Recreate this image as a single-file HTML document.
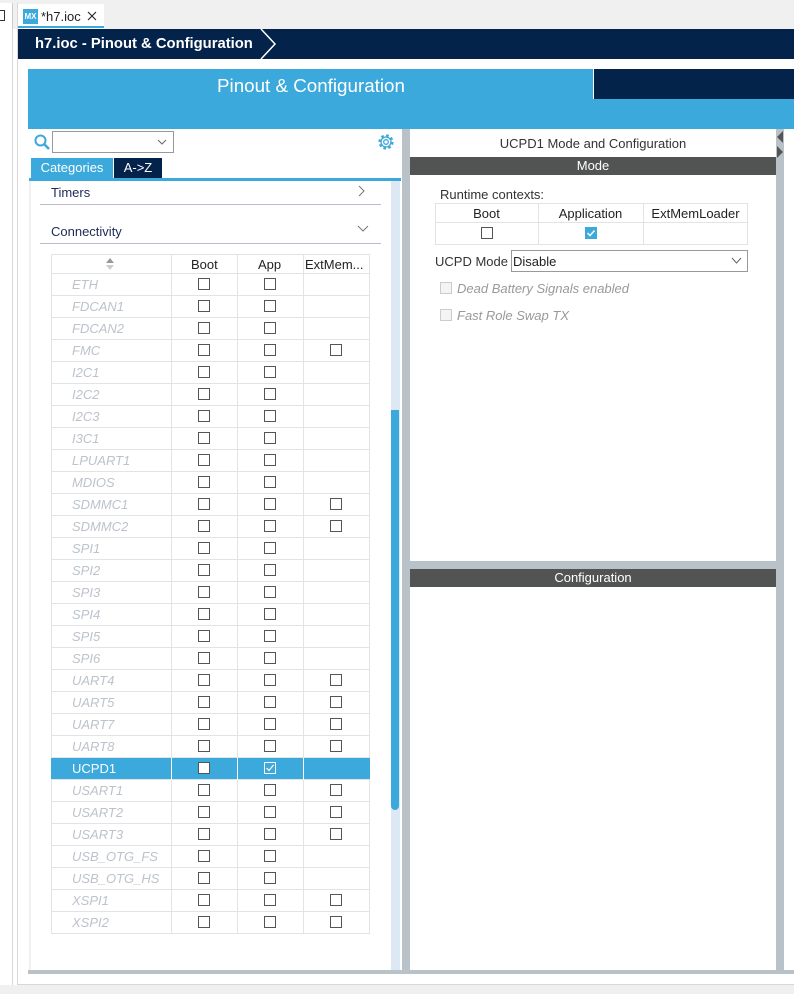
<!DOCTYPE html>
<html><head><meta charset="utf-8"><style>
*{margin:0;padding:0;box-sizing:border-box}
body{width:794px;height:994px;overflow:hidden;background:#fff;font-family:"Liberation Sans",sans-serif;position:relative}
.a{position:absolute}
.cb{position:absolute;width:12px;height:12px;border:1px solid #555;background:#fff}
.t{font-size:13px;color:#222}
.row{position:absolute;left:51px;width:319px;height:22px;border-bottom:1px solid #e3e3e3}
.row .n{position:absolute;left:21px;top:3px;font-size:13px;font-style:italic;color:#bcc3cc}
.vl{position:absolute;top:0;width:1px;height:22px;background:#e3e3e3}
</style></head><body>
<div class="a" style="left:0;top:0;width:794px;height:29px;background:#f0f0f0"></div>
<div class="a" style="left:0;top:3px;width:13px;height:26px;background:#fff;border-right:1px solid #ccc"></div>
<div class="a" style="left:0;top:10px;width:5px;height:11px;border:1px solid #333;border-left:none"></div>
<div class="a" style="left:0;top:29px;width:13px;height:956px;background:#fff;border-right:1px solid #d8d8d8"></div>
<div class="a" style="left:17px;top:3px;width:1px;height:982px;background:#d8d8d8"></div>
<div class="a" style="left:18px;top:4px;width:86px;height:25px;background:#fff"></div>
<div class="a" style="left:23px;top:9px;width:15px;height:15px;background:#3ba9db;color:#fff;font-size:8px;font-weight:bold;line-height:15px;text-align:center">MX</div>
<div class="a t" style="left:41px;top:9px;font-size:13px">*h7.ioc</div>
<svg class="a" style="left:87px;top:11px" width="10" height="10"><path d="M1 1L9 9M9 1L1 9" stroke="#222" stroke-width="1.1"/></svg>
<div class="a" style="left:18px;top:26px;width:86px;height:2px;background:#3ba9db"></div>
<div class="a" style="left:18px;top:29px;width:776px;height:30px;background:#03234b"></div>
<div class="a" style="left:35px;top:36px;color:#fff;font-weight:bold;font-size:14.8px">h7.ioc - Pinout &amp; Configuration</div>
<svg class="a" style="left:258px;top:29px" width="22" height="30"><polyline points="3,0 17,15 3,30" fill="none" stroke="#fff" stroke-width="1.5"/></svg>
<div class="a" style="left:28px;top:69px;width:766px;height:60px;background:#3ba9db"></div>
<div class="a" style="left:593px;top:69px;width:201px;height:30px;background:#03234b;border-left:1px solid #fff"></div>
<div class="a" style="left:217px;top:75px;color:#fff;font-size:18.8px">Pinout &amp; Configuration</div>
<div class="a" style="left:28px;top:129px;width:374px;height:845px;background:#fff"></div>
<svg class="a" style="left:34px;top:134px" width="16" height="16"><circle cx="6.5" cy="6.5" r="5" fill="none" stroke="#3ba9db" stroke-width="2"/><line x1="10" y1="10" x2="15" y2="15" stroke="#3ba9db" stroke-width="2.5"/></svg>
<div class="a" style="left:52px;top:131px;width:122px;height:22px;border:1px solid #999"></div>
<svg class="a" style="left:157px;top:138px" width="10" height="8"><polyline points="1,2 5,6 9,2" fill="none" stroke="#666" stroke-width="1"/></svg>
<svg class="a" style="left:377px;top:133px" width="18" height="18" viewBox="0 0 18 18"><circle cx="9" cy="9" r="6" fill="none" stroke="#3ba9db" stroke-width="3.2" stroke-dasharray="2.4 2.3"/><circle cx="9" cy="9" r="5" fill="none" stroke="#3ba9db" stroke-width="1.3"/><circle cx="9" cy="9" r="2.3" fill="none" stroke="#3ba9db" stroke-width="1.3"/></svg>
<div class="a" style="left:31px;top:158px;width:82px;height:20px;background:#3ba9db;color:#fff;font-size:13px;line-height:20px;text-align:center">Categories</div>
<div class="a" style="left:114px;top:158px;width:48px;height:20px;background:#03234b;color:#fff;font-size:13px;line-height:20px;text-align:center">A-&gt;Z</div>
<div class="a" style="left:29px;top:178px;width:372px;height:3px;background:#3ba9db"></div>
<div class="a" style="left:29px;top:181px;width:2px;height:790px;background:#f0f0f0"></div>
<div class="a" style="left:391px;top:181px;width:9px;height:790px;background:#dce9f5"></div>
<div class="a" style="left:391px;top:410px;width:8px;height:400px;background:#3ba9db;border-radius:0 0 4px 4px"></div>
<div class="a" style="left:51px;top:185px;font-size:13px;color:#1e2a55">Timers</div>
<svg class="a" style="left:358px;top:185px" width="8" height="12"><polyline points="1,1 6,6 1,11" fill="none" stroke="#777"/></svg>
<div class="a" style="left:40px;top:204px;width:341px;height:1px;background:#bbc"></div>
<div class="a" style="left:51px;top:224px;font-size:13px;color:#1e2a55">Connectivity</div>
<svg class="a" style="left:357px;top:225px" width="12" height="8"><polyline points="1,1 6,6 11,1" fill="none" stroke="#777"/></svg>
<div class="a" style="left:40px;top:243px;width:341px;height:1px;background:#bbc"></div>
<div class="a" style="left:51px;top:254px;width:319px;height:680px;border:1px solid #e3e3e3;border-bottom:none"></div>
<div class="row" style="top:254px;height:20px">
<svg class="a" style="left:54px;top:4px" width="10" height="12"><polygon points="5,0 9,5 1,5" fill="#999"/><polygon points="5,12 9,7 1,7" fill="#ccc"/></svg>
<div class="vl" style="left:120px;height:20px"></div><div class="vl" style="left:186px;height:20px"></div><div class="vl" style="left:252px;height:20px"></div>
<div class="a t" style="left:140px;top:3px">Boot</div><div class="a t" style="left:207px;top:3px">App</div><div class="a t" style="left:254px;top:3px">ExtMem...</div>
</div>
<div id="rows"></div>
<div class="a" style="left:402px;top:129px;width:8px;height:845px;background:#b8c2c8"></div>
<div class="a" style="left:28px;top:970px;width:766px;height:4px;background:#b8c2c8"></div>
<div class="a" style="left:18px;top:984px;width:776px;height:1px;background:#d8d8d8"></div>
<div class="a" style="left:0;top:985px;width:794px;height:9px;background:#f0f0f0"></div>
<div class="a" style="left:410px;top:129px;width:366px;height:841px;background:#fff"></div>
<div class="a" style="left:776px;top:129px;width:8px;height:842px;background:#b8c2c8"></div>
<svg class="a" style="left:776px;top:130px" width="8" height="30"><polygon points="7,1 1,7 7,13" fill="#555"/><polygon points="1,16 7,22 1,28" fill="#555"/></svg>
<div class="a t" style="left:410px;width:366px;text-align:center;top:136px;font-size:13px;color:#333">UCPD1 Mode and Configuration</div>
<div class="a" style="left:410px;top:157px;width:366px;height:18px;background:#525453;color:#fff;font-size:13px;text-align:center;line-height:18px">Mode</div>
<div class="a t" style="left:440px;top:187px;color:#333">Runtime contexts:</div>
<div class="a" style="left:435px;top:203px;width:313px;height:42px;border:1px solid #e3e3e3"></div>
<div class="a" style="left:435px;top:222px;width:313px;height:1px;background:#e3e3e3"></div>
<div class="a" style="left:538px;top:203px;width:1px;height:42px;background:#e3e3e3"></div>
<div class="a" style="left:643px;top:203px;width:1px;height:42px;background:#e3e3e3"></div>
<div class="a t" style="left:435px;width:103px;text-align:center;top:206px">Boot</div>
<div class="a t" style="left:538px;width:105px;text-align:center;top:206px">Application</div>
<div class="a t" style="left:643px;width:105px;text-align:center;top:206px">ExtMemLoader</div>
<div class="cb" style="left:481px;top:227px"></div>
<div class="a" style="left:585px;top:227px;width:12px;height:12px;background:#3ba9db"></div>
<svg class="a" style="left:585px;top:227px" width="12" height="12"><polyline points="2.5,6 5,8.5 9.5,3.5" fill="none" stroke="#fff" stroke-width="1.5"/></svg>
<div class="a t" style="left:435px;top:254px;color:#333">UCPD Mode</div>
<div class="a" style="left:511px;top:250px;width:237px;height:22px;border:1px solid #999"></div>
<div class="a t" style="left:513px;top:254px">Disable</div>
<svg class="a" style="left:731px;top:257px" width="11" height="8"><polyline points="1,1 5.5,6 10,1" fill="none" stroke="#666"/></svg>
<div class="a" style="left:440px;top:282px;width:12px;height:12px;border:1px solid #ccc;background:#f4f4f4"></div>
<div class="a" style="left:457px;top:281px;font-size:13px;font-style:italic;color:#999">Dead Battery Signals enabled</div>
<div class="a" style="left:440px;top:309px;width:12px;height:12px;border:1px solid #ccc;background:#f4f4f4"></div>
<div class="a" style="left:457px;top:308px;font-size:13px;font-style:italic;color:#999">Fast Role Swap TX</div>
<div class="a" style="left:410px;top:561px;width:366px;height:8px;background:#b8c2c8"></div>
<div class="a" style="left:410px;top:569px;width:366px;height:18px;background:#525453;color:#fff;font-size:13px;text-align:center;line-height:18px">Configuration</div>
<script>
var names=["ETH","FDCAN1","FDCAN2","FMC","I2C1","I2C2","I2C3","I3C1","LPUART1","MDIOS","SDMMC1","SDMMC2","SPI1","SPI2","SPI3","SPI4","SPI5","SPI6","UART4","UART5","UART7","UART8","UCPD1","USART1","USART2","USART3","USB_OTG_FS","USB_OTG_HS","XSPI1","XSPI2"];
var ext={FMC:1,SDMMC1:1,SDMMC2:1,UART4:1,UART5:1,UART7:1,UART8:1,USART1:1,USART2:1,USART3:1,XSPI1:1,XSPI2:1};
var h="";
names.forEach(function(n,i){
 var top=274+i*22, sel=n=="UCPD1";
 h+='<div class="row" style="top:'+top+'px;'+(sel?'background:#3ba9db;':'')+'">';
 h+='<div class="n" style="'+(sel?'color:#fff;font-style:normal':'')+'">'+n+'</div>';
 h+='<div class="vl" style="left:120px'+(sel?';background:#fff':'')+'"></div><div class="vl" style="left:186px'+(sel?';background:#fff':'')+'"></div><div class="vl" style="left:252px'+(sel?';background:#fff':'')+'"></div>';
 h+='<div class="cb" style="left:147px;top:4px"></div>';
 if(sel){h+='<div class="cb" style="left:213px;top:4px;border-color:#fff;background:#3ba9db"></div><svg class="a" style="left:213px;top:4px" width="12" height="12"><polyline points="2.5,6 5,8.5 9.5,3" fill="none" stroke="#fff" stroke-width="1.2"/></svg>';}
 else h+='<div class="cb" style="left:213px;top:4px"></div>';
 if(ext[n])h+='<div class="cb" style="left:279px;top:4px"></div>';
 h+='</div>';
});
document.getElementById("rows").innerHTML=h;
</script>
</body></html>
